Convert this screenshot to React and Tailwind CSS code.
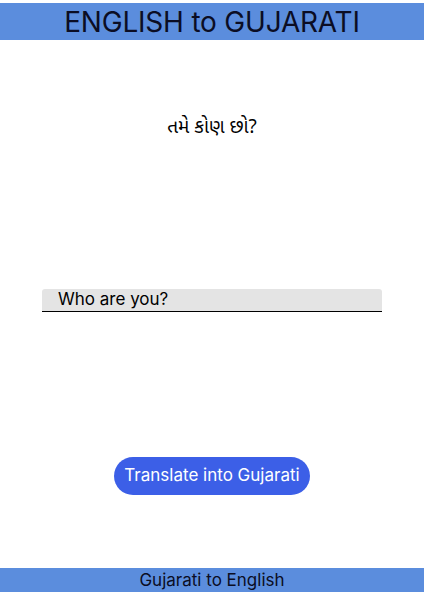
import React, { useState } from "react";

export default function App() {
  const [text, setText] = useState("Who are you?");

  return (
    <div className="w-[424px] h-[592px] bg-white flex flex-col font-['Inter','Noto_Sans',sans-serif]">
      <header className="mt-[3px] h-[37px] bg-[#5b8ddd] flex items-center justify-center">
        <h1 className="text-[28px] leading-none text-[#0b0d24] tracking-[-0.2px]">ENGLISH to GUJARATI</h1>
      </header>

      <main className="flex-1 flex flex-col items-center">
        <p className="mt-[75px] text-[19px] text-black font-['Noto_Sans_Gujarati','Noto_Sans','DejaVu_Sans',sans-serif]">
          તમે કોણ છો?
        </p>

        <input
          value={text}
          onChange={(e) => setText(e.target.value)}
          className="mt-[145px] w-[340px] h-[23px] bg-[#e4e4e4] border-b border-black rounded-t-[3px] px-4 text-[17px] text-black outline-none"
        />

        <button className="mt-[145px] w-[196px] h-[38px] rounded-full bg-[#3c5fe7] text-white text-[17px]">
          Translate into Gujarati
        </button>
      </main>

      <footer className="h-[24px] bg-[#5b8ddd] flex items-center justify-center">
        <span className="text-[17px] leading-none text-[#0b0d24]">Gujarati to English</span>
      </footer>
    </div>
  );
}
